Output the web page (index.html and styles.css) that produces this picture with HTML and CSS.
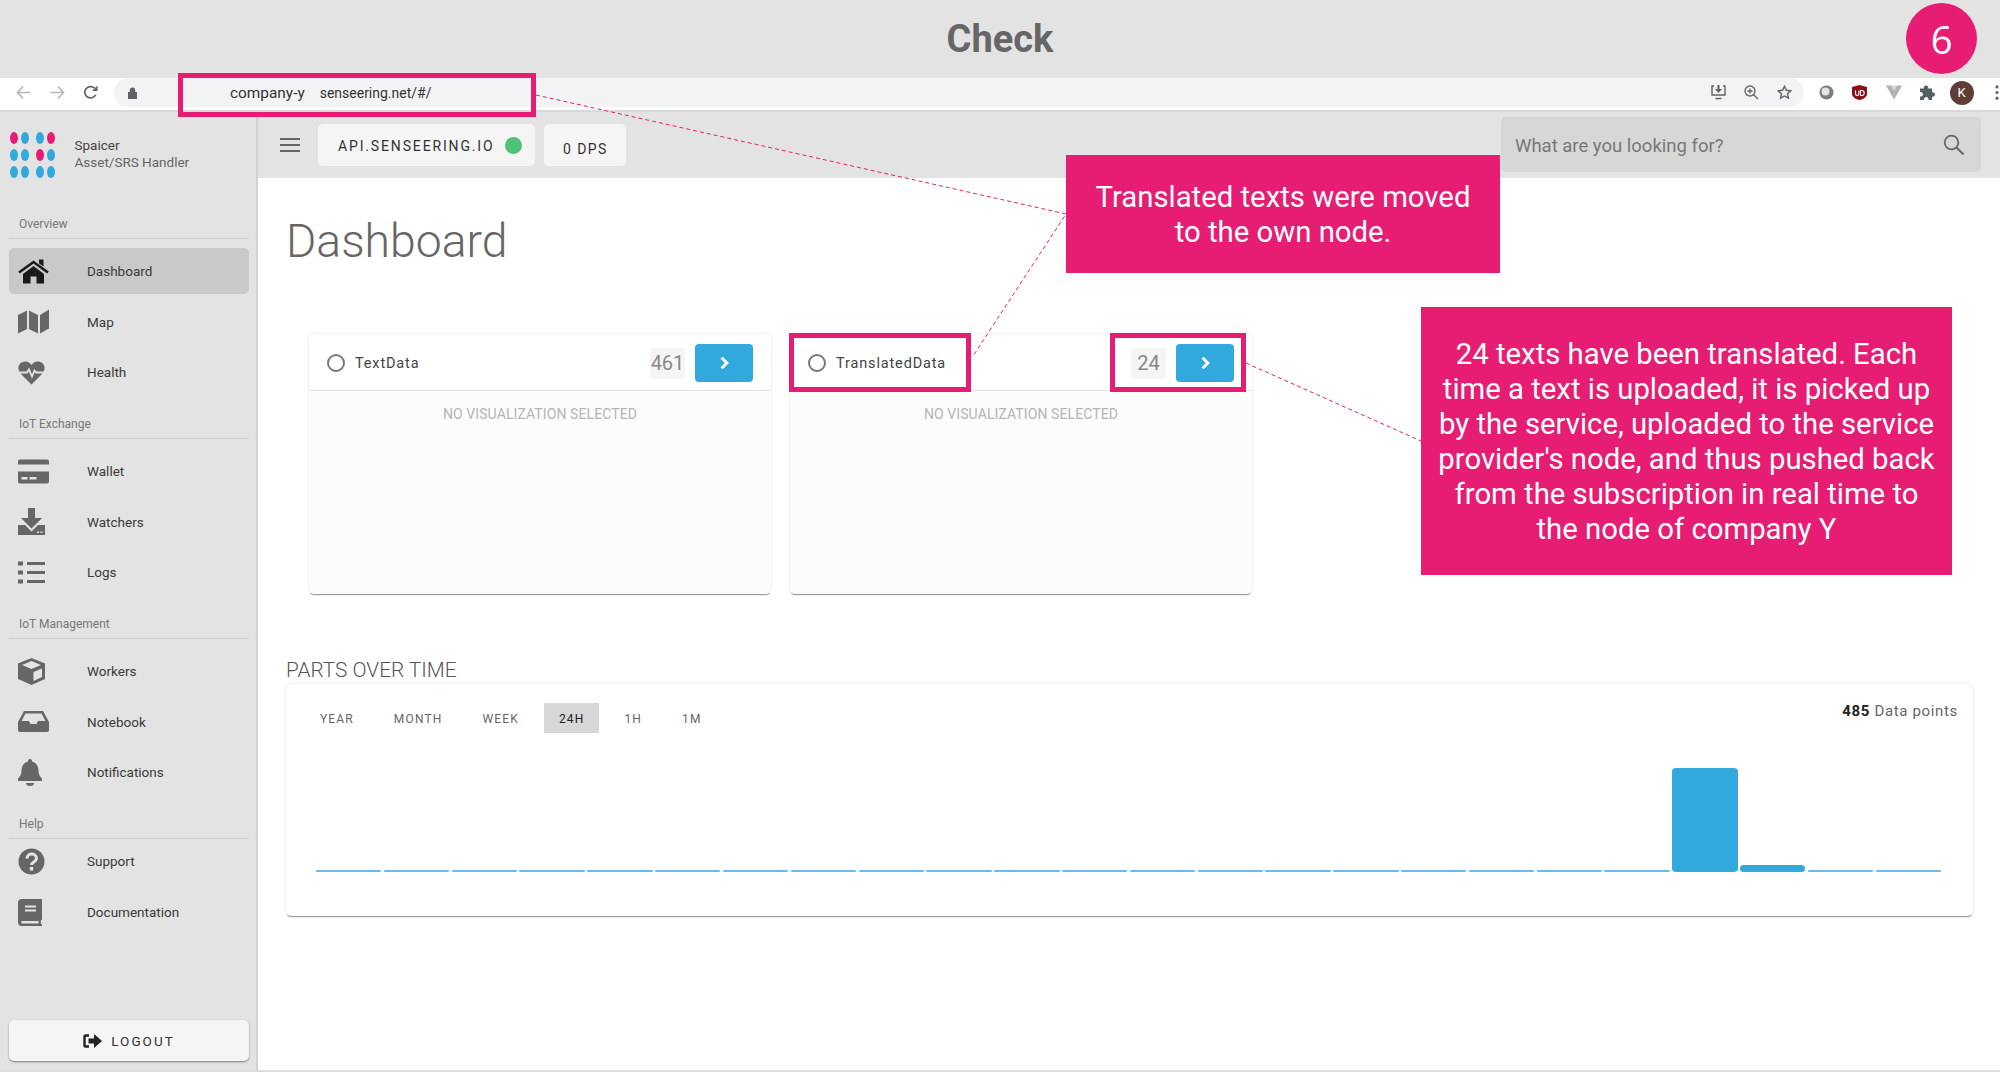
FILE: index.html
```html
<!DOCTYPE html>
<html lang="en">
<head>
    <meta charset="UTF-8">
    <title>Check</title>
    <link rel="stylesheet" href="styles.css">
</head>
<body>
    <header class="slide-title">Check</header>

    <div class="chrome">
        <svg class="chrome-nav" viewBox="0 0 15 14"><path d="M14.5 7H1.5M7 1 1.5 7 7 13" fill="none" stroke="#b4b7ba" stroke-width="1.6"/></svg>
        <svg class="chrome-nav" viewBox="0 0 15 14"><path d="M.5 7h13M8 1l5.500 6L8 13" fill="none" stroke="#b4b7ba" stroke-width="1.600"/></svg>
        <svg class="chrome-nav" viewBox="0 0 15 15"><path d="M12.600 9.800A5.700 5.700 0 1 1 11.500 3.200" fill="none" stroke="#5f6368" stroke-width="1.700"/><path d="M9 6h5.500V.5z" fill="#5f6368"/></svg>
        <div class="omnibox">
            <svg class="lock" viewBox="0 0 9 12"><path d="M1.800 5V3.200a2.700 2.700 0 0 1 5.400 0V5H9v7H0V5z" fill="#5f6368"/></svg>
            <span class="url-company">company-y</span>
            <span class="url-host">senseering.net/#/</span>
            <div class="omni-icons">
                <svg class="chrome-icon" viewBox="0 0 15 15"><path d="M3 1H1v9h13V1h-2M4.500 13.500h6" fill="none" stroke="#5f6368" stroke-width="1.400"/><path d="M6.500 0h2v4H11L7.500 8 4 4h2.500z" fill="#5f6368"/></svg>
                <svg class="chrome-icon" viewBox="0 0 15 15"><circle cx="6" cy="6" r="5" fill="none" stroke="#5f6368" stroke-width="1.300"/><path d="M9.500 9.500 14 14M3.500 6h5M6 3.500v5" fill="none" stroke="#5f6368" stroke-width="1.300"/></svg>
                <svg class="chrome-icon" viewBox="0 0 15 15"><path d="m7.500 1.300 1.900 4 4.400.5-3.300 3 .9 4.400-3.900-2.200-3.900 2.200.9-4.400-3.300-3 4.400-.5z" fill="none" stroke="#5f6368" stroke-width="1.400"/></svg>
            </div>
        </div>
        <div class="extensions">
            <svg class="chrome-icon" viewBox="0 0 15 15"><circle cx="7.500" cy="7.500" r="7" fill="#7d7d7d"/><circle cx="6.500" cy="6.500" r="4" fill="#e4e4e4"/></svg>
            <svg class="chrome-icon" viewBox="0 0 15 15"><path d="M7.500 0 15 2v7c0 3-4 5.500-7.500 6C4 14.500 0 12 0 9V2z" fill="#8b0f14"/><path d="M3.500 5.500v3.300a1.700 1.700 0 0 0 3.400 0V5.500M8.500 5.500v5h1.200a2.500 2.500 0 0 0 0-5z" fill="none" stroke="#fff" stroke-width="1.100"/></svg>
            <svg class="chrome-icon chrome-icon--wide" viewBox="0 0 16 14"><path d="M0 0h5l3 5 3-5h5L8 14z" fill="#b1b1b1"/><path d="M5 0h6L8 5z" fill="#d5d5d5"/></svg>
            <svg class="chrome-icon" viewBox="0 0 15 15"><path d="M0 3.500h3.800a2.300 2.300 0 1 1 4.400 0H12v3.800a2.300 2.300 0 1 1 0 4.400V15H8.500a2.300 2.300 0 1 0-4.400 0H0v-3.500a2.300 2.300 0 1 0 0-4.400z" fill="#555f66"/></svg>
            <div class="avatar">K</div>
            <svg class="dots" viewBox="0 0 4 16"><circle cx="2" cy="2" r="1.700"/><circle cx="2" cy="8" r="1.700"/><circle cx="2" cy="14" r="1.700"/></svg>
        </div>
    </div>

    <div class="app">
        <aside class="sidebar">
            <div class="brand">
                <div class="logo">
                    <i class="pink"></i><i></i><i></i><i class="pink"></i>
                    <i></i><i></i><i class="pink"></i><i></i>
                    <i></i><i></i><i></i><i></i>
                </div>
                <div class="brand-text">
                    <div class="brand-name">Spaicer</div>
                    <div class="brand-sub">Asset/SRS Handler</div>
                </div>
            </div>

            <div class="nav-label nav-label--first">Overview</div>
            <nav class="nav-list">
                <a class="nav-item active">
                    <svg class="nav-icon" viewBox="0 0 31 24"><path d="M1 13 15.500 2.500 30 13" fill="none" stroke="currentColor" stroke-width="2.600"/><path d="M21 0h4.500v7L21 4zM5 14.500 15.500 6.500 26 14.500V24h-7.500v-7h-6v7H5z"/></svg>
                    Dashboard
                </a>
                <a class="nav-item">
                    <svg class="nav-icon" viewBox="0 0 31 24"><path d="M0 5.500 9 1v18.500L0 24zM11 1l9 4.500V24l-9-4.500zM22 5.500 31 0v19l-9 5z"/></svg>
                    Map
                </a>
                <a class="nav-item">
                    <svg class="nav-icon nav-icon--narrow" viewBox="0 0 27 24"><path d="M13.500 24 3 13.500C-1.500 9 0 1.500 7 1c3-.2 5 1.500 6.500 3.500C15 2.500 17 .8 20 1c7 .5 8.500 8 4 12.500z"/><path d="M0 12h9l2-3 3 7 2.500-6 1.500 2h9" fill="none" stroke="#e3e3e3" stroke-width="1.800"/></svg>
                    Health
                </a>
            </nav>

            <div class="nav-label">IoT Exchange</div>
            <nav class="nav-list">
                <a class="nav-item">
                    <svg class="nav-icon" viewBox="0 0 31 24"><path d="M2 0h27a2 2 0 0 1 2 2v3H0V2a2 2 0 0 1 2-2zM0 12h31v10a2 2 0 0 1-2 2H2a2 2 0 0 1-2-2z"/><path d="M3.500 17.500h6v2.500h-6zM11.500 17.500h7v2.500h-7z" fill="#e3e3e3"/></svg>
                    Wallet
                </a>
                <a class="nav-item">
                    <svg class="nav-icon nav-icon--narrow" viewBox="0 0 27 27"><path d="M10 0h7v10h7L13.500 20.500 3 10h7zM0 17h7l6.500 6.500L20 17h7v10H0z"/><path d="M19 23.500h2v1.500h-2zM22.500 23.500h2v1.500h-2z" fill="#e3e3e3"/></svg>
                    Watchers
                </a>
                <a class="nav-item">
                    <svg class="nav-icon nav-icon--narrow" viewBox="0 0 27 22"><path d="M0 0h5v4H0zM0 9h5v4H0zM0 18h5v4H0zM9 .5h18v3H9zM9 9.500h18v3H9zM9 18.500h18v3H9z"/></svg>
                    Logs
                </a>
            </nav>

            <div class="nav-label">IoT Management</div>
            <nav class="nav-list">
                <a class="nav-item">
                    <svg class="nav-icon nav-icon--narrow" viewBox="0 0 27 27"><path d="M13.500 0 27 5.500V21l-13.500 6L0 21V5.500z"/><path d="M13.500 3 23 7l-9.500 4L4 7zM15.500 14 24 10.500V19l-8.500 4z" fill="#e3e3e3"/></svg>
                    Workers
                </a>
                <a class="nav-item">
                    <svg class="nav-icon" viewBox="0 0 31 21"><path d="M6 0h19l6 11v8a2 2 0 0 1-2 2H2a2 2 0 0 1-2-2v-8z"/><path d="M7.500 2.500h16L27.500 10H20l-1.500 3h-6L11 10H3.500z" fill="#e3e3e3"/></svg>
                    Notebook
                </a>
                <a class="nav-item">
                    <svg class="nav-icon nav-icon--bell" viewBox="0 0 24 27"><path d="M12 0a2 2 0 0 1 2 2.500c4.500 1 6.500 5 6.500 9 0 4 1.500 6 3.500 8V22H0v-2.500c2-2 3.500-4 3.500-8 0-4 2-8 6.500-9A2 2 0 0 1 12 0zM8 24h8a4 3 0 0 1-8 0z"/></svg>
                    Notifications
                </a>
            </nav>

            <div class="nav-label">Help</div>
            <nav class="nav-list nav-list--tight">
                <a class="nav-item">
                    <svg class="nav-icon nav-icon--narrow" viewBox="0 0 27 26"><circle cx="13.500" cy="13" r="13"/><path d="M9 10c0-6 9.500-6 9.500 0 0 3.500-5 3.500-5 6.500" fill="none" stroke="#e3e3e3" stroke-width="3"/><path d="M11.800 18.500h3.400V22h-3.400z" fill="#e3e3e3"/></svg>
                    Support
                </a>
                <a class="nav-item">
                    <svg class="nav-icon nav-icon--bell" viewBox="0 0 24 27"><path d="M4 0h20v20.500l-1.200 1v3l1.200 1V27H4a4 4 0 0 1-4-4V4a4 4 0 0 1 4-4z"/><path d="M7 6.500h11v2H7zM7 10.500h11v2H7zM3.500 22h17v2.500h-17z" fill="#e3e3e3"/></svg>
                    Documentation
                </a>
            </nav>

            <button class="logout">
                <svg viewBox="0 0 19 14"><path d="M6 1.500H2.500a1 1 0 0 0-1 1v9a1 1 0 0 0 1 1H6" fill="none" stroke="#222" stroke-width="2.400"/><path d="M5.500 4.500H11V0l8 7-8 7V9.500H5.500z" fill="#222"/></svg>
                LOGOUT
            </button>
        </aside>

        <main class="main">
            <div class="topbar">
                <svg class="menu-icon" viewBox="0 0 20 14"><path d="M0 1h20M0 7h20M0 13h20" stroke="#666" stroke-width="2"/></svg>
                <div class="chip chip--api">API.SENSEERING.IO<span class="status-dot"></span></div>
                <div class="chip chip--dps">0 DPS</div>
                <div class="search">
                    <span>What are you looking for?</span>
                    <svg viewBox="0 0 21 21"><circle cx="8.500" cy="8.500" r="6.800" fill="none" stroke="#666" stroke-width="1.800"/><path d="m13.500 13.500 7 7" stroke="#666" stroke-width="2"/></svg>
                </div>
            </div>

            <div class="content">
                <h1 class="page-title">Dashboard</h1>

                <div class="cards">
                    <div class="card">
                        <div class="card-head">
                            <span class="radio"></span>
                            <span class="card-name">TextData</span>
                            <span class="count">461</span>
                            <button class="go"><svg viewBox="0 0 9 12"><path d="m2 1.500 4.500 4.500L2 10.500" fill="none" stroke="#fff" stroke-width="2.600"/></svg></button>
                        </div>
                        <div class="card-body">NO VISUALIZATION SELECTED</div>
                    </div>
                    <div class="card">
                        <div class="card-head">
                            <span class="radio"></span>
                            <span class="card-name">TranslatedData</span>
                            <span class="count">24</span>
                            <button class="go"><svg viewBox="0 0 9 12"><path d="m2 1.500 4.500 4.500L2 10.500" fill="none" stroke="#fff" stroke-width="2.600"/></svg></button>
                        </div>
                        <div class="card-body">NO VISUALIZATION SELECTED</div>
                    </div>
                </div>

                <h2 class="section-title">PARTS OVER TIME</h2>
                <div class="chart-card">
                    <div class="chart-head">
                        <div class="tabs">
                            <span class="tab">YEAR</span>
                            <span class="tab">MONTH</span>
                            <span class="tab">WEEK</span>
                            <span class="tab active">24H</span>
                            <span class="tab">1H</span>
                            <span class="tab">1M</span>
                        </div>
                        <div class="data-points"><b>485</b> Data points</div>
                    </div>
                    <div class="bars">
                        <i class="bar"></i><i class="bar"></i><i class="bar"></i><i class="bar"></i>
                        <i class="bar"></i><i class="bar"></i><i class="bar"></i><i class="bar"></i>
                        <i class="bar"></i><i class="bar"></i><i class="bar"></i><i class="bar"></i>
                        <i class="bar"></i><i class="bar"></i><i class="bar"></i><i class="bar"></i>
                        <i class="bar"></i><i class="bar"></i><i class="bar"></i><i class="bar"></i>
                        <i class="bar bar--full" style="height: 104px"></i>
                        <i class="bar bar--full" style="height: 7px"></i>
                        <i class="bar"></i><i class="bar"></i>
                    </div>
                </div>
            </div>
        </main>
    </div>

    <!-- annotations laid over the screenshot -->
    <svg class="callout-lines" viewBox="0 0 2000 1073">
        <path d="M536 95 1066 214 973 356M1246 363 1421 441"/>
    </svg>
    <div class="outline outline--url"></div>
    <div class="outline outline--name"></div>
    <div class="outline outline--count"></div>
    <div class="step">6</div>
    <div class="note note--node">Translated texts were moved<br>to the own node.</div>
    <div class="note note--count">24 texts have been translated. Each<br>time a text is uploaded, it is picked up<br>by the service, uploaded to the service<br>provider's node, and thus pushed back<br>from the subscription in real time to<br>the node of company Y</div>
</body>
</html>
```

FILE: styles.css
```css
* {
    box-sizing: border-box;
}

body {
    margin: 0;
    width: 2000px;
    height: 1073px;
    position: relative;
    overflow: hidden;
    background-color: #fff;
    font-family: 'Roboto', sans-serif;
    color: #333;
}

.slide-title {
    height: 78px;
    background-color: #e3e3e3;
    color: #666;
    font-size: 38px;
    font-weight: bold;
    display: flex;
    align-items: center;
    justify-content: center;
}

/* browser bar */
.chrome {
    height: 34px;
    padding: 0 0 3px 16px;
    background-color: #fff;
    border-bottom: 2px solid #d9d9d9;
    display: flex;
    align-items: center;
}

.chrome-nav {
    width: 15px;
    height: 15px;
    margin-right: 18.5px;
}

.omnibox {
    width: 1690px;
    height: 29px;
    margin-left: -2.5px;
    padding: 0 12.5px 0 14px;
    background-color: #f1f3f4;
    border-radius: 15px;
    display: flex;
    align-items: center;
    font-size: 14px;
    color: #333;
}

.lock {
    width: 9px;
    height: 12px;
}

.url-company {
    margin-left: 93px;
    font-size: 15.4px;
}

.url-host {
    margin-left: 15px;
}

.omni-icons {
    margin-left: auto;
    display: flex;
    gap: 18px;
}

.chrome-icon {
    width: 15px;
    height: 15px;
    display: block;
}

.chrome-icon--wide {
    width: 16px;
}

.extensions {
    margin-left: 15px;
    display: flex;
    align-items: center;
    gap: 18.4px;
}

.avatar {
    width: 24px;
    height: 24px;
    margin-left: -4px;
    border-radius: 50%;
    background-color: #5d3f36;
    color: #fff;
    font-size: 13px;
    display: flex;
    align-items: center;
    justify-content: center;
}

.dots {
    width: 4px;
    height: 15px;
    margin-left: 3px;
    fill: #5f6368;
}

/* app */
.app {
    height: 960px;
    display: flex;
    border-bottom: 2px solid #ddd;
}

.sidebar {
    width: 258px;
    flex-shrink: 0;
    padding: 0 7px 9px 9px;
    background-color: #e3e3e3;
    border-right: 2px solid #d2d2d2;
    display: flex;
    flex-direction: column;
}

.brand {
    height: 100px;
    padding-top: 20px;
    display: flex;
}

.logo {
    width: 47px;
    margin-left: .5px;
    margin-right: 18px;
    display: grid;
    grid-template-columns: 8px 12.5px 8px 8px;
    column-gap: 3px;
    row-gap: 5px;
    grid-auto-rows: 12px;
    align-self: flex-start;
}

.logo i {
    width: 8px;
    border-radius: 50%;
    background-color: #31a9dd;
}

.logo i.pink {
    background-color: #e71d73;
}

.brand-text {
    padding-top: 5px;
    font-size: 13.5px;
    line-height: 17px;
}

.brand-name {
    color: #444;
}

.brand-sub {
    color: #666;
}

.nav-label {
    height: 27px;
    margin-top: 17px;
    padding: 4px 0 0 10px;
    border-bottom: 1px solid #cfcfcf;
    font-size: 12px;
    line-height: 16px;
    color: #777;
}

.nav-label--first {
    margin-top: 0;
}

.nav-list {
    margin-top: 9px;
    display: flex;
    flex-direction: column;
    gap: 4.5px;
}

.nav-list--tight {
    margin-top: -1px;
    gap: 5px;
}

.nav-item {
    height: 46px;
    padding-left: 9px;
    border-radius: 5px;
    display: flex;
    align-items: center;
    font-size: 13.5px;
    color: #3a3a3a;
}

.nav-item.active {
    background-color: #c9c9c9;
}

.nav-icon {
    width: 31px;
    height: 27px;
    margin-right: 38px;
    flex-shrink: 0;
    fill: #666;
    color: #666;
}

.nav-item.active .nav-icon {
    fill: #1a1a1a;
    color: #1a1a1a;
}

.nav-icon--narrow {
    width: 27px;
    margin-right: 42px;
}

.nav-icon--bell {
    width: 24px;
    margin-right: 45px;
}

.logout {
    height: 41px;
    margin-top: auto;
    padding: 0;
    border: none;
    border-radius: 5px;
    background-color: #f5f5f5;
    box-shadow: 0 1px 2px rgba(0, 0, 0, 0.45);
    display: flex;
    align-items: center;
    justify-content: center;
    gap: 9px;
    font-family: inherit;
    font-size: 13.5px;
    letter-spacing: 2px;
    color: #333;
}

.logout svg {
    width: 19px;
    height: 14px;
}

.main {
    flex: 1;
    display: flex;
    flex-direction: column;
}

.topbar {
    height: 66px;
    padding-left: 22px;
    padding-right: 19px;
    background-color: #e3e3e3;
    display: flex;
    align-items: center;
}

.menu-icon {
    width: 20px;
    height: 14px;
    margin-right: 18px;
}

.chip {
    height: 42px;
    padding-top: 1px;
    border-radius: 5px;
    background-color: #f5f5f5;
    display: flex;
    align-items: center;
    font-size: 14px;
    letter-spacing: 1.85px;
    color: #333;
}

.chip--api {
    width: 217px;
    padding-left: 20px;
}

.chip--dps {
    width: 82px;
    margin-left: 9px;
    padding: 7px 0 0 19px;
    letter-spacing: 1.4px;
}

.status-dot {
    width: 17px;
    height: 17px;
    margin-left: 10px;
    margin-top: -1px;
    border-radius: 50%;
    background-color: #4fc178;
}

.search {
    width: 480px;
    height: 55px;
    margin-left: auto;
    margin-top: -1px;
    padding: 0 17px 0 14px;
    border-radius: 5px;
    background-color: #d7d7d7;
    display: flex;
    align-items: center;
    justify-content: space-between;
    font-size: 18.5px;
    color: #777;
}

.search span {
    padding-top: 2px;
}

.search svg {
    width: 21px;
    height: 21px;
}

.content {
    padding: 0 27px 0 28px;
}

.page-title {
    margin: 0;
    padding-top: 35px;
    font-size: 46.3px;
    line-height: 56px;
    font-weight: 300;
    color: #666;
}

.cards {
    margin: 65px 0 0 23px;
    display: flex;
    gap: 19px;
}

.card {
    width: 462px;
    height: 260px;
    border-radius: 5px;
    box-shadow: 0 0 3px rgba(0, 0, 0, 0.12), 0 2px 1px -1px rgba(0, 0, 0, 0.4);
    overflow: hidden;
}

.card-head {
    height: 57px;
    padding: 2px 18px 0;
    background-color: #fff;
    border-bottom: 1px solid #e2e2e2;
    display: flex;
    align-items: center;
}

.radio {
    width: 18px;
    height: 18px;
    border: 2px solid #777;
    border-radius: 50%;
}

.card-name {
    margin-left: 10px;
    padding-top: 1px;
    font-size: 14.5px;
    letter-spacing: 0.85px;
    color: #444;
}

.count {
    width: 35px;
    height: 31px;
    margin-left: auto;
    border-radius: 4px;
    background-color: #f5f5f5;
    display: flex;
    align-items: center;
    justify-content: center;
    font-size: 20px;
    color: #888;
}

.go {
    width: 58px;
    height: 38px;
    margin-left: 10px;
    border: none;
    border-radius: 4px;
    background-color: #31a9dd;
    display: flex;
    align-items: center;
    justify-content: center;
}

.go svg {
    width: 11px;
    height: 14px;
}

.card-body {
    height: 203px;
    padding-top: 15px;
    background-color: #fcfcfc;
    text-align: center;
    font-size: 14px;
    line-height: 17px;
    letter-spacing: 0.1px;
    color: #b5b5b5;
}

.section-title {
    margin: 63px 0 0;
    font-size: 20.8px;
    line-height: 26px;
    font-weight: 300;
    color: #555;
}

.chart-card {
    height: 232px;
    margin-top: 1px;
    padding: 19px 15px 0 19px;
    border-radius: 5px;
    box-shadow: 0 0 3px rgba(0, 0, 0, 0.12), 0 2px 1px -1px rgba(0, 0, 0, 0.4);
}

.chart-head {
    display: flex;
    justify-content: space-between;
}

.tabs {
    display: flex;
    gap: 10px;
}

.tab {
    height: 30px;
    padding: 2px 15px 0;
    display: flex;
    align-items: center;
    font-size: 12px;
    letter-spacing: 1.15px;
    color: #666;
}

.tab.active {
    background-color: #d7d7d7;
    color: #222;
}

.data-points {
    font-size: 15px;
    line-height: 16px;
    letter-spacing: 0.65px;
    color: #666;
}

.data-points b {
    color: #222;
}

.bars {
    height: 120px;
    margin: 19px 17px 0 11px;
    display: flex;
    align-items: flex-end;
    gap: 2.4px;
}

.bar {
    flex: 1;
    height: 2px;
    background-color: #68bde6;
    border-radius: 1px;
}

.bar--full {
    background-color: #31a9dd;
    border-radius: 4px;
}

/* annotations */
.callout-lines {
    position: absolute;
    left: 0;
    top: 0;
    width: 2000px;
    height: 1073px;
    fill: none;
    stroke: #e71d73;
    stroke-width: 1;
    stroke-dasharray: 4 3;
}

.outline {
    position: absolute;
    border: 5px solid #e71d73;
}

.outline--url {
    left: 178px;
    top: 73px;
    width: 358px;
    height: 44px;
}

.outline--name {
    left: 789px;
    top: 333px;
    width: 182px;
    height: 59px;
}

.outline--count {
    left: 1110px;
    top: 333px;
    width: 136px;
    height: 59px;
}

.step {
    position: absolute;
    left: 1906px;
    top: 3px;
    width: 71px;
    height: 71px;
    border-radius: 50%;
    background-color: #e71d73;
    color: #fff;
    font-family: 'Open Sans', sans-serif;
    font-size: 38px;
    display: flex;
    align-items: center;
    justify-content: center;
}

.note {
    position: absolute;
    padding-top: 2px;
    background-color: #e71d73;
    color: #fff;
    font-size: 29.3px;
    line-height: 35px;
    text-align: center;
    display: flex;
    align-items: center;
    justify-content: center;
}

.note--node {
    left: 1066px;
    top: 155px;
    width: 434px;
    height: 118px;
}

.note--count {
    left: 1421px;
    top: 307px;
    width: 531px;
    height: 268px;
}
```
